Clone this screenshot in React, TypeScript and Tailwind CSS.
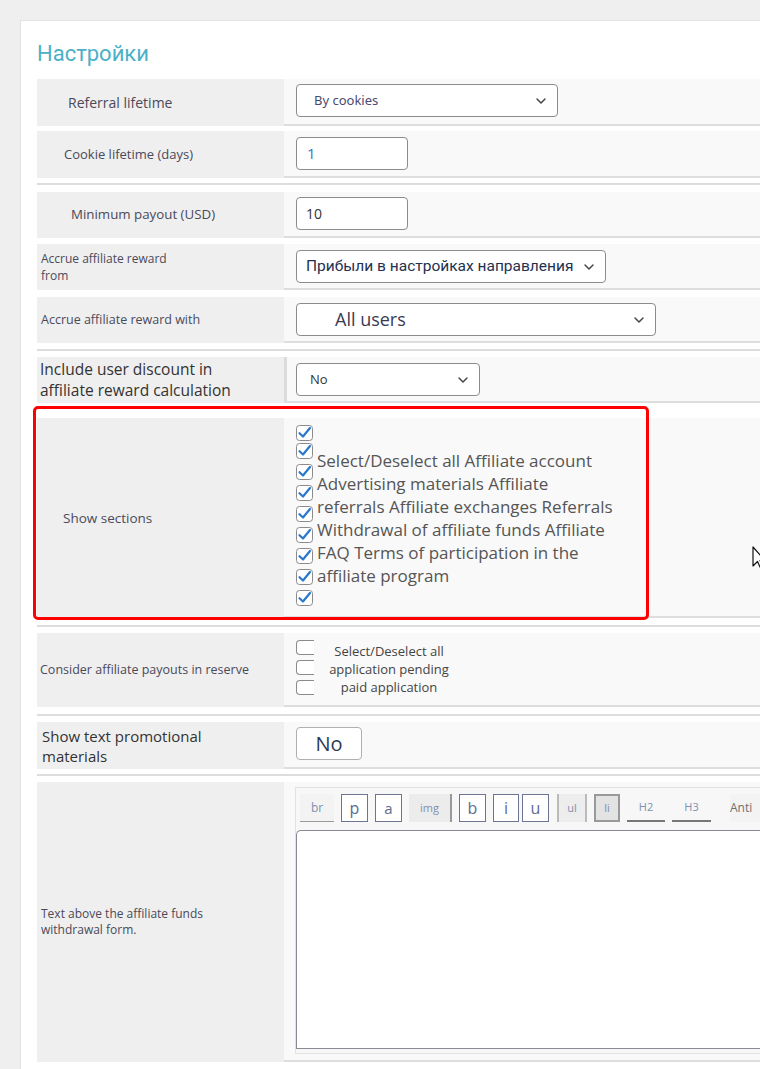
import { ChevronDown } from "lucide-react";

const open = { fontFamily: '"Open Sans", "Liberation Sans", sans-serif' };
const roboto = { fontFamily: 'Roboto, "Liberation Sans", sans-serif' };

const Check = () => (
  <svg width="17" height="16" viewBox="0 0 17 16" className="block">
    <rect x="0.5" y="0.5" width="16" height="15" rx="3" fill="#fff" stroke="#8a8a8a" />
    <path d="M3.5 8.2 L7 11.5 L14 3" fill="none" stroke="#2a78cc" strokeWidth="2.2" strokeLinecap="round" strokeLinejoin="round" />
  </svg>
);

const EmptyBox = () => (
  <div className="h-[15px] w-[18px] rounded-l-[4px] border border-r-0 border-[#8a8a8a] bg-white" />
);

const Select = ({ label, width, text }: { label: string; width: string; text: string }) => (
  <div
    className={`flex h-[33px] items-center justify-between rounded-[4px] border border-[#8c8c8c] bg-white pr-[8px] ${width}`}
  >
    <span className={text}>{label}</span>
    <ChevronDown size={16} strokeWidth={2.2} color="#444" />
  </div>
);

const Row = ({
  label,
  children,
  className,
  labelClass,
}: {
  label: React.ReactNode;
  children?: React.ReactNode;
  className: string;
  labelClass: string;
}) => (
  <div className={`flex ${className}`}>
    <div className={`flex w-[247px] shrink-0 items-center bg-[#efefef] text-[#4a4a5a] ${labelClass}`} style={open}>
      {label}
    </div>
    <div className="flex-1 border-b-2 border-[#dedede] bg-[#f9f9f9] pl-[12px]">{children}</div>
  </div>
);

const Divider = ({ className }: { className: string }) => <div className={`h-[2px] bg-[#dddddd] ${className}`} />;

const ToolBtn = ({ label, className }: { label: string; className: string }) => (
  <div className={`flex h-[28px] items-center justify-center ${className}`} style={open}>
    {label}
  </div>
);

export default function App() {
  return (
    <div className="min-h-[1069px] w-[760px] overflow-hidden bg-[#efefef] pl-[20px] pt-[20px]">
      <div className="min-h-[1049px] border-l border-t border-[#e2e2e2] bg-white pl-[16px]">
        <h1 className="mt-[19px] mb-[11px] h-[28px] text-[22px] leading-[28px] text-[#4bb0c6]" style={roboto}>
          Настройки
        </h1>

        <Row className="h-[47px]" labelClass="pl-[31px] text-[14px]" label="Referral lifetime">
          <div className="pt-[5px]">
            <Select label="By cookies" width="w-[262px]" text="pl-[17px] text-[13px] text-[#4a4a70]" />
          </div>
        </Row>

        <Row className="mt-[5px] h-[47px]" labelClass="pl-[27px] text-[13px]" label="Cookie lifetime (days)">
          <div className="pt-[6px]">
            <div className="flex h-[33px] w-[112px] items-center rounded-[4px] border border-[#8c8c8c] bg-white pl-[10px] text-[15px] text-[#3a78b8]" style={open}>
              1
            </div>
          </div>
        </Row>

        <Divider className="mt-[5px]" />

        <Row className="mt-[7px] h-[46px]" labelClass="pl-[34px] text-[13.3px]" label="Minimum payout (USD)">
          <div className="pt-[5px]">
            <div className="flex h-[33px] w-[112px] items-center rounded-[4px] border border-[#8c8c8c] bg-white pl-[9px] text-[14px] text-[#333]" style={open}>
              10
            </div>
          </div>
        </Row>

        <Row
          className="mt-[6px] h-[46px]"
          labelClass="pl-[4px] text-[12px] leading-[17px]"
          label={
            <span>
              Accrue affiliate reward
              <br />
              from
            </span>
          }
        >
          <div className="pt-[6px]" style={roboto}>
            <Select label="Прибыли в настройках направления" width="w-[310px]" text="pl-[9px] text-[15.5px] text-[#24304f]" />
          </div>
        </Row>

        <Row className="mt-[7px] h-[46px]" labelClass="pl-[4px] text-[12.5px]" label="Accrue affiliate reward with">
          <div className="pt-[6px]" style={open}>
            <Select label="All users" width="w-[360px]" text="pl-[38px] text-[18px] text-[#3a3a55]" />
          </div>
        </Row>

        <Divider className="mt-[6px]" />

        <Row
          className="mt-[6px] h-[46px]"
          labelClass="pl-[3px] text-[15.5px] leading-[21px] text-[#333]"
          label={
            <span>
              Include user discount in
              <br />
              affiliate reward calculation
            </span>
          }
        >
          <div className="-ml-[12px] h-full border-l-[3px] border-[#dcdcdc] pl-[9px] pt-[6px]" style={open}>
            <Select label="No" width="w-[184px]" text="pl-[13px] text-[13px] text-[#333]" />
          </div>
        </Row>

        <div className="relative mt-[15px]">
          <Row className="h-[200px]" labelClass="pl-[26px] text-[13.5px]" label="Show sections">
            <div className="flex gap-[4px]">
              <div className="flex flex-col pt-[7px]">
                <Check />
                <div className="mt-[2px]">
                  <Check />
                </div>
                {[0, 1, 2, 3, 4, 5, 6].map((i) => (
                  <div key={i} className="mt-[5px]">
                    <Check />
                  </div>
                ))}
              </div>
              <div className="pt-[31px] text-[17px] leading-[23px] text-[#555]" style={open}>
                <div>Select/Deselect all Affiliate account</div>
                <div>Advertising materials Affiliate</div>
                <div>referrals Affiliate exchanges Referrals</div>
                <div>Withdrawal of affiliate funds Affiliate</div>
                <div>FAQ Terms of participation in the</div>
                <div>affiliate program</div>
              </div>
            </div>
          </Row>
          <div className="pointer-events-none absolute -left-[4px] -top-[12px] h-[214px] w-[616px] rounded-[5px] border-[3px] border-[#ff0000]" />
          <svg className="absolute left-[715px] top-[128px]" width="14" height="26" viewBox="0 0 14 26">
            <path d="M1 1 L1 20 L5.5 15.5 L9 23 L11.5 22 L8 14.5 L13 14.5 Z" fill="#fff" stroke="#111" strokeWidth="1.2" strokeLinejoin="round" />
          </svg>
        </div>

        <Divider className="mt-[7px]" />

        <Row className="mt-[6px] h-[74px]" labelClass="pl-[3px] text-[12.5px]" label="Consider affiliate payouts in reserve">
          <div className="flex" style={open}>
            <div className="flex flex-col gap-[5px] pt-[7px]">
              <EmptyBox />
              <EmptyBox />
              <EmptyBox />
            </div>
            <div className="w-[150px] pt-[9px] text-center text-[13px] leading-[18px] text-[#444]">
              <div>Select/Deselect all</div>
              <div>application pending</div>
              <div>paid application</div>
            </div>
          </div>
        </Row>

        <Divider className="mt-[7px]" />

        <Row
          className="mt-[6px] h-[47px]"
          labelClass="pl-[5px] text-[15px] leading-[20px] text-[#333]"
          label={
            <span>
              Show text promotional
              <br />
              materials
            </span>
          }
        >
          <div className="pt-[5px]">
            <div className="flex h-[33px] w-[66px] items-center justify-center rounded-[4px] border border-[#b0b0b0] bg-white text-[20px] text-[#2b3a55]" style={open}>
              No
            </div>
          </div>
        </Row>

        <Divider className="mt-[5px]" />

        <Row
          className="mt-[6px] h-[280px]"
          labelClass="pl-[4px] text-[12px] leading-[16px]"
          label={
            <span>
              Text above the affiliate funds
              <br />
              withdrawal form.
            </span>
          }
        >
          <div className="-ml-[1px] mt-[5px] flex h-[267px] flex-col border border-r-0 border-[#e2e2e2] bg-[#f7f7f7]">
            <div className="flex items-center gap-[7px] pl-[4px] pt-[6px] text-[#5d6b90]">
              <ToolBtn label="br" className="w-[34px] border-b border-[#999] bg-[#f3f3f3] text-[12px] text-[#8090b0]" />
              <ToolBtn label="p" className="w-[27px] border border-[#6d7593] bg-white text-[16px]" />
              <ToolBtn label="a" className="w-[27px] border border-[#6d7593] bg-white text-[15px]" />
              <ToolBtn label="img" className="w-[43px] border-r-2 border-[#999] bg-[#ececec] text-[11px] text-[#8090b0]" />
              <ToolBtn label="b" className="w-[27px] border border-[#6d7593] bg-white text-[16px]" />
              <div className="flex gap-[3px]">
                <ToolBtn label="i" className="w-[26px] border border-[#6d7593] bg-white text-[16px]" />
                <ToolBtn label="u" className="w-[27px] border border-[#6d7593] bg-white text-[16px]" />
              </div>
              <ToolBtn label="ul" className="ml-[1px] w-[30px] border-x-2 border-[#bbb] bg-[#ededed] text-[11px] text-[#8090b0]" />
              <ToolBtn label="li" className="w-[26px] border-2 border-[#999] bg-[#e3e3e3] text-[11px] text-[#8090b0]" />
              <ToolBtn label="H2" className="w-[38px] border-b-2 border-[#777] text-[11px] text-[#8090b0]" />
              <ToolBtn label="H3" className="w-[39px] border-b-2 border-[#777] text-[11px] text-[#8090b0]" />
              <ToolBtn label="Anti" className="ml-[12px] w-[40px] justify-start bg-[#f3f3f3] text-[12px] text-[#707070]" />
            </div>
            <div className="mt-[8px] h-[219px] rounded-tl-[5px] border border-r-0 border-[#8a8a96] bg-white" />
          </div>
        </Row>
      </div>
    </div>
  );
}
